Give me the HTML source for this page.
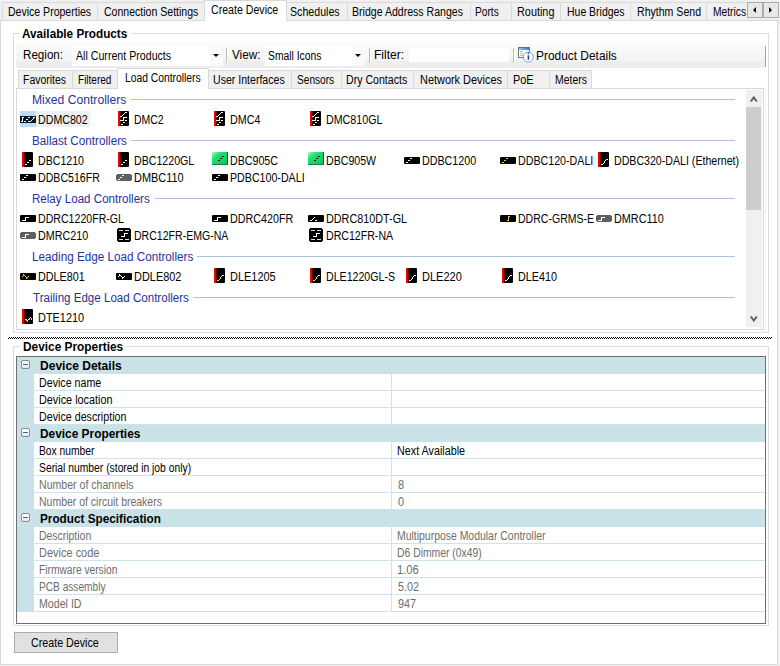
<!DOCTYPE html><html><head><meta charset='utf-8'><style>html,body{margin:0;padding:0;}body{width:780px;height:666px;overflow:hidden;background:#f0f0f0;position:relative;font-family:'Liberation Sans',sans-serif;}.a{position:absolute;box-sizing:border-box;}.t{position:absolute;white-space:pre;line-height:normal;transform-origin:0 0;}svg.a{display:block}</style></head><body><div class='a' style='left:0px;top:20px;width:778px;height:645px;background:#fff;border:1px solid #d9d9d9;'></div><div class='a' style='left:2px;top:2px;width:96px;height:19px;background:#f0f0f0;border:1px solid #d9d9d9;'></div><span class='t' style='left:7.62px;top:5px;font-size:12px;color:#000;transform:scaleX(0.8777);'>Device Properties</span><div class='a' style='left:97px;top:2px;width:108px;height:19px;background:#f0f0f0;border:1px solid #d9d9d9;'></div><span class='t' style='left:104.00px;top:5px;font-size:12px;color:#000;transform:scaleX(0.8785);'>Connection Settings</span><div class='a' style='left:286px;top:2px;width:62px;height:19px;background:#f0f0f0;border:1px solid #d9d9d9;'></div><span class='t' style='left:290.41px;top:5px;font-size:12px;color:#000;transform:scaleX(0.8855);'>Schedules</span><div class='a' style='left:347px;top:2px;width:124px;height:19px;background:#f0f0f0;border:1px solid #d9d9d9;'></div><span class='t' style='left:352.12px;top:5px;font-size:12px;color:#000;transform:scaleX(0.8800);'>Bridge Address Ranges</span><div class='a' style='left:470px;top:2px;width:42px;height:19px;background:#f0f0f0;border:1px solid #d9d9d9;'></div><span class='t' style='left:475.45px;top:5px;font-size:12px;color:#000;transform:scaleX(0.8481);'>Ports</span><div class='a' style='left:511px;top:2px;width:50px;height:19px;background:#f0f0f0;border:1px solid #d9d9d9;'></div><span class='t' style='left:517.10px;top:5px;font-size:12px;color:#000;transform:scaleX(0.9050);'>Routing</span><div class='a' style='left:560px;top:2px;width:71px;height:19px;background:#f0f0f0;border:1px solid #d9d9d9;'></div><span class='t' style='left:566.63px;top:5px;font-size:12px;color:#000;transform:scaleX(0.8723);'>Hue Bridges</span><div class='a' style='left:630px;top:2px;width:77px;height:19px;background:#f0f0f0;border:1px solid #d9d9d9;'></div><span class='t' style='left:636.62px;top:5px;font-size:12px;color:#000;transform:scaleX(0.8803);'>Rhythm Send</span><div class='a' style='left:706px;top:2px;width:95px;height:19px;background:#f0f0f0;border:1px solid #d9d9d9;'></div><span class='t' style='left:712.94px;top:5px;font-size:12px;color:#000;transform:scaleX(0.8553);'>Metrics</span><div class='a' style='left:204px;top:0;width:83px;height:21px;background:#fff;border:1px solid #d9d9d9;border-bottom:none'></div><span class='t' style='left:210.80px;top:3px;font-size:12px;color:#000;transform:scaleX(0.8842);'>Create Device</span><div class='a' style='left:747px;top:2px;width:16px;height:16px;background:#e8e8e8;border:1px solid #acacac'></div><div class='a' style='left:763px;top:2px;width:16px;height:16px;background:#e8e8e8;border:1px solid #acacac'></div><div class='a' style='left:753px;top:7px;width:0;height:0;border-top:3px solid transparent;border-bottom:3px solid transparent;border-right:3px solid #000'></div><div class='a' style='left:769px;top:7px;width:0;height:0;border-top:3px solid transparent;border-bottom:3px solid transparent;border-left:3px solid #000'></div><div class='a' style='left:779px;top:0;width:1px;height:666px;background:#f0f0f0'></div><div class='a' style='left:13px;top:33px;width:756px;height:300px;border:1px solid #dcdcdc;'></div><div class='a' style='left:20px;top:30px;width:112px;height:7px;background:#fff;'></div><span class='t' style='left:22.00px;top:27px;font-size:12px;font-weight:700;color:#000;transform:scaleX(0.9787);'>Available Products</span><div class='a' style='left:16px;top:43px;width:750px;height:25px;border-radius:3px;background:linear-gradient(#fbfbfb,#f3f3f3 72%,#eeeeee 74%,#ededed)'></div><div class='a' style='left:765px;top:46px;width:1px;height:21px;background:#a0a0a0;'></div><span class='t' style='left:22.63px;top:48px;font-size:12px;color:#000;transform:scaleX(0.9675);'>Region:</span><div class='a' style='left:72px;top:45px;width:151px;height:21px;background:#fff;'></div><div class='a' style='left:210px;top:45px;width:13px;height:21px;background:#fafafa;'></div><div class='a' style='left:213px;top:54px;width:0;height:0;border-left:3px solid transparent;border-right:3px solid transparent;border-top:3px solid #000'></div><span class='t' style='left:76.00px;top:49px;font-size:12px;color:#000;transform:scaleX(0.8860);'>All Current Products</span><div class='a' style='left:226px;top:48px;width:1px;height:15px;background:#bcbcbc;'></div><div class='a' style='left:227px;top:48px;width:1px;height:15px;background:#fff;'></div><span class='t' style='left:232.00px;top:48px;font-size:12px;color:#000;transform:scaleX(0.9750);'>View:</span><div class='a' style='left:265px;top:45px;width:100px;height:21px;background:#fff;'></div><div class='a' style='left:352px;top:45px;width:13px;height:21px;background:#fafafa;'></div><div class='a' style='left:355px;top:54px;width:0;height:0;border-left:3px solid transparent;border-right:3px solid transparent;border-top:3px solid #000'></div><span class='t' style='left:267.64px;top:49px;font-size:12px;color:#000;transform:scaleX(0.8607);'>Small Icons</span><div class='a' style='left:369px;top:48px;width:1px;height:15px;background:#bcbcbc;'></div><div class='a' style='left:370px;top:48px;width:1px;height:15px;background:#fff;'></div><span class='t' style='left:374.40px;top:48px;font-size:12px;color:#000;transform:scaleX(1.0036);'>Filter:</span><div class='a' style='left:409px;top:48px;width:100px;height:14px;background:#fff;'></div><div class='a' style='left:513px;top:48px;width:1px;height:15px;background:#bcbcbc;'></div><div class='a' style='left:514px;top:48px;width:1px;height:15px;background:#fff;'></div><svg class='a' style='left:517px;top:46px' width='17' height='17' viewBox='0 0 17 17'><defs><linearGradient id='pdg' x1='0' x2='1'><stop offset='0' stop-color='#9cc3f0'/><stop offset='1' stop-color='#3d7bd6'/></linearGradient></defs><rect x='1.5' y='1.5' width='11' height='10' fill='#fff' stroke='#707070'/><rect x='2' y='2' width='10' height='2' fill='url(#pdg)'/><rect x='3' y='5' width='3' height='1' fill='#a9c6ec'/><rect x='3' y='7' width='3' height='1' fill='#a9c6ec'/><rect x='3' y='9' width='3' height='1' fill='#a9c6ec'/><circle cx='11.3' cy='11' r='5' fill='#fff' stroke='#7fa3d6' stroke-width='1'/><rect x='10.6' y='9.3' width='1.6' height='4.5' fill='#1a47b0'/><rect x='10.6' y='6.6' width='1.6' height='1.4' fill='#1a47b0'/></svg><span class='t' style='left:536.31px;top:49px;font-size:12px;color:#000;transform:scaleX(0.9925);'>Product Details</span><div class='a' style='left:16px;top:88px;width:748px;height:242px;background:#fff;border:1px solid #d9d9d9;'></div><div class='a' style='left:765px;top:89px;width:1px;height:242px;background:#f3f3f3;'></div><div class='a' style='left:17px;top:330px;width:749px;height:1px;background:#f7f7f7;'></div><div class='a' style='left:18px;top:70px;width:55px;height:19px;background:#f0f0f0;border:1px solid #d9d9d9;'></div><span class='t' style='left:23.33px;top:73px;font-size:12px;color:#000;transform:scaleX(0.8708);'>Favorites</span><div class='a' style='left:72px;top:70px;width:46px;height:19px;background:#f0f0f0;border:1px solid #d9d9d9;'></div><span class='t' style='left:78.36px;top:73px;font-size:12px;color:#000;transform:scaleX(0.8359);'>Filtered</span><div class='a' style='left:208px;top:70px;width:84px;height:19px;background:#f0f0f0;border:1px solid #d9d9d9;'></div><span class='t' style='left:213.12px;top:73px;font-size:12px;color:#000;transform:scaleX(0.8812);'>User Interfaces</span><div class='a' style='left:291px;top:70px;width:51px;height:19px;background:#f0f0f0;border:1px solid #d9d9d9;'></div><span class='t' style='left:296.86px;top:73px;font-size:12px;color:#000;transform:scaleX(0.8442);'>Sensors</span><div class='a' style='left:341px;top:70px;width:73px;height:19px;background:#f0f0f0;border:1px solid #d9d9d9;'></div><span class='t' style='left:346.42px;top:73px;font-size:12px;color:#000;transform:scaleX(0.8824);'>Dry Contacts</span><div class='a' style='left:413px;top:70px;width:95px;height:19px;background:#f0f0f0;border:1px solid #d9d9d9;'></div><span class='t' style='left:419.79px;top:73px;font-size:12px;color:#000;transform:scaleX(0.9101);'>Network Devices</span><div class='a' style='left:507px;top:70px;width:43px;height:19px;background:#f0f0f0;border:1px solid #d9d9d9;'></div><span class='t' style='left:513.09px;top:73px;font-size:12px;color:#000;transform:scaleX(0.9091);'>PoE</span><div class='a' style='left:549px;top:70px;width:43px;height:19px;background:#f0f0f0;border:1px solid #d9d9d9;'></div><span class='t' style='left:555.13px;top:73px;font-size:12px;color:#000;transform:scaleX(0.8694);'>Meters</span><div class='a' style='left:117px;top:68px;width:92px;height:21px;background:#fff;border:1px solid #d9d9d9;border-bottom:none'></div><span class='t' style='left:124.54px;top:71px;font-size:12px;color:#000;transform:scaleX(0.8598);'>Load Controllers</span><span class='t' style='left:31.79px;top:93px;font-size:12px;color:#1e32a0;transform:scaleX(1.0109);'>Mixed Controllers</span><div class='a' style='left:130px;top:99px;width:605px;height:1px;background:#b1c3e0;'></div><span class='t' style='left:31.82px;top:134px;font-size:12px;color:#1e32a0;transform:scaleX(0.9750);'>Ballast Controllers</span><div class='a' style='left:131px;top:140px;width:604px;height:1px;background:#b1c3e0;'></div><span class='t' style='left:31.84px;top:192px;font-size:12px;color:#1e32a0;transform:scaleX(0.9645);'>Relay Load Controllers</span><div class='a' style='left:155px;top:198px;width:580px;height:1px;background:#b1c3e0;'></div><span class='t' style='left:31.82px;top:250px;font-size:12px;color:#1e32a0;transform:scaleX(0.9750);'>Leading Edge Load Controllers</span><div class='a' style='left:197px;top:256px;width:538px;height:1px;background:#b1c3e0;'></div><span class='t' style='left:32.80px;top:291px;font-size:12px;color:#1e32a0;transform:scaleX(0.9642);'>Trailing Edge Load Controllers</span><div class='a' style='left:193px;top:297px;width:542px;height:1px;background:#b1c3e0;'></div><div class='a' style='left:36px;top:111px;width:54px;height:16px;background:#efefef;'></div><svg class='a' style='left:20px;top:111px' width='16' height='16' viewBox='0 0 16 16' shape-rendering='crispEdges'><rect x='0' y='0' width='16' height='16' fill='#bcdcf4'/><rect x='0' y='5' width='16' height='7' fill='#061528'/><rect x='2' y='6' width='1' height='5' fill='#fff'/><rect x='3' y='6' width='1' height='1' fill='#fff'/><rect x='1' y='10' width='1' height='1' fill='#fff'/><rect x='4' y='10' width='2' height='1' fill='#fff'/><rect x='6' y='8' width='2' height='1' fill='#fff'/><rect x='8' y='6' width='2' height='1' fill='#fff'/><rect x='8' y='10' width='2' height='1' fill='#fff'/><rect x='10' y='10' width='1' height='1' fill='#fff'/><rect x='11' y='9' width='1' height='1' fill='#fff'/><rect x='12' y='8' width='1' height='1' fill='#fff'/><rect x='13' y='7' width='1' height='1' fill='#fff'/><rect x='13' y='6' width='2' height='1' fill='#fff'/></svg><span class='t' style='left:37.61px;top:113px;font-size:12px;color:#000;transform:scaleX(0.8873);'>DDMC802</span><svg class='a' style='left:118px;top:111px' width='11' height='15' viewBox='0 0 11 15' shape-rendering='crispEdges'><defs><linearGradient id='rg' x1='0' x2='1'><stop offset='0' stop-color='#ff0000'/><stop offset='0.55' stop-color='#e00000'/><stop offset='1' stop-color='#000'/></linearGradient></defs><rect x='0' y='0' width='11' height='15' fill='#000'/><rect x='0' y='0' width='3' height='15' fill='url(#rg)'/><rect x='10' y='0' width='1' height='1' fill='#444'/><rect x='10' y='14' width='1' height='1' fill='#444'/><rect x='7' y='1' width='2' height='1' fill='#fff'/><rect x='6' y='2' width='1' height='1' fill='#fff'/><rect x='5' y='3' width='1' height='1' fill='#fff'/><rect x='4' y='4' width='1' height='1' fill='#fff'/><rect x='2' y='5' width='2' height='1' fill='#fff'/><rect x='5' y='6' width='4' height='1' fill='#fff'/><rect x='5' y='6' width='1' height='4' fill='#fff'/><rect x='2' y='9' width='4' height='1' fill='#fff'/><rect x='7' y='9' width='2' height='1' fill='#fff'/><rect x='5' y='11' width='2' height='1' fill='#fff'/><rect x='3' y='13' width='2' height='1' fill='#fff'/></svg><span class='t' style='left:133.63px;top:113px;font-size:12px;color:#000;transform:scaleX(0.8727);'>DMC2</span><svg class='a' style='left:214px;top:111px' width='11' height='15' viewBox='0 0 11 15' shape-rendering='crispEdges'><defs><linearGradient id='rg' x1='0' x2='1'><stop offset='0' stop-color='#ff0000'/><stop offset='0.55' stop-color='#e00000'/><stop offset='1' stop-color='#000'/></linearGradient></defs><rect x='0' y='0' width='11' height='15' fill='#000'/><rect x='0' y='0' width='3' height='15' fill='url(#rg)'/><rect x='10' y='0' width='1' height='1' fill='#444'/><rect x='10' y='14' width='1' height='1' fill='#444'/><rect x='7' y='1' width='2' height='1' fill='#fff'/><rect x='6' y='2' width='1' height='1' fill='#fff'/><rect x='5' y='3' width='1' height='1' fill='#fff'/><rect x='4' y='4' width='1' height='1' fill='#fff'/><rect x='2' y='5' width='2' height='1' fill='#fff'/><rect x='5' y='6' width='4' height='1' fill='#fff'/><rect x='5' y='6' width='1' height='4' fill='#fff'/><rect x='2' y='9' width='4' height='1' fill='#fff'/><rect x='7' y='9' width='2' height='1' fill='#fff'/><rect x='5' y='11' width='2' height='1' fill='#fff'/><rect x='3' y='13' width='2' height='1' fill='#fff'/></svg><span class='t' style='left:229.61px;top:113px;font-size:12px;color:#000;transform:scaleX(0.8939);'>DMC4</span><svg class='a' style='left:310px;top:111px' width='11' height='15' viewBox='0 0 11 15' shape-rendering='crispEdges'><defs><linearGradient id='rg' x1='0' x2='1'><stop offset='0' stop-color='#ff0000'/><stop offset='0.55' stop-color='#e00000'/><stop offset='1' stop-color='#000'/></linearGradient></defs><rect x='0' y='0' width='11' height='15' fill='#000'/><rect x='0' y='0' width='3' height='15' fill='url(#rg)'/><rect x='10' y='0' width='1' height='1' fill='#444'/><rect x='10' y='14' width='1' height='1' fill='#444'/><rect x='7' y='1' width='2' height='1' fill='#fff'/><rect x='6' y='2' width='1' height='1' fill='#fff'/><rect x='5' y='3' width='1' height='1' fill='#fff'/><rect x='4' y='4' width='1' height='1' fill='#fff'/><rect x='2' y='5' width='2' height='1' fill='#fff'/><rect x='5' y='6' width='4' height='1' fill='#fff'/><rect x='5' y='6' width='1' height='4' fill='#fff'/><rect x='2' y='9' width='4' height='1' fill='#fff'/><rect x='7' y='9' width='2' height='1' fill='#fff'/><rect x='5' y='11' width='2' height='1' fill='#fff'/><rect x='3' y='13' width='2' height='1' fill='#fff'/></svg><span class='t' style='left:325.61px;top:113px;font-size:12px;color:#000;transform:scaleX(0.8903);'>DMC810GL</span><svg class='a' style='left:22px;top:152px' width='11' height='15' viewBox='0 0 11 15' shape-rendering='crispEdges'><defs><linearGradient id='rg' x1='0' x2='1'><stop offset='0' stop-color='#ff0000'/><stop offset='0.55' stop-color='#e00000'/><stop offset='1' stop-color='#000'/></linearGradient></defs><rect x='0' y='0' width='11' height='15' fill='#000'/><rect x='0' y='0' width='3' height='15' fill='url(#rg)'/><rect x='10' y='0' width='1' height='1' fill='#444'/><rect x='10' y='14' width='1' height='1' fill='#444'/><rect x='7' y='8' width='2' height='1' fill='#fff'/><rect x='5' y='10' width='2' height='1' fill='#fff'/><rect x='3' y='12' width='2' height='1' fill='#fff'/></svg><span class='t' style='left:37.62px;top:154px;font-size:12px;color:#000;transform:scaleX(0.8843);'>DBC1210</span><svg class='a' style='left:118px;top:152px' width='11' height='15' viewBox='0 0 11 15' shape-rendering='crispEdges'><defs><linearGradient id='rg' x1='0' x2='1'><stop offset='0' stop-color='#ff0000'/><stop offset='0.55' stop-color='#e00000'/><stop offset='1' stop-color='#000'/></linearGradient></defs><rect x='0' y='0' width='11' height='15' fill='#000'/><rect x='0' y='0' width='3' height='15' fill='url(#rg)'/><rect x='10' y='0' width='1' height='1' fill='#444'/><rect x='10' y='14' width='1' height='1' fill='#444'/><rect x='7' y='8' width='2' height='1' fill='#fff'/><rect x='5' y='10' width='2' height='1' fill='#fff'/><rect x='3' y='12' width='2' height='1' fill='#fff'/></svg><span class='t' style='left:133.61px;top:154px;font-size:12px;color:#000;transform:scaleX(0.8851);'>DBC1220GL</span><svg class='a' style='left:212px;top:152px' width='16' height='13' viewBox='0 0 16 13' shape-rendering='crispEdges'><defs><linearGradient id='gg' x1='0' y1='0' x2='1' y2='1'><stop offset='0' stop-color='#9dffc8'/><stop offset='0.3' stop-color='#1ee070'/><stop offset='1' stop-color='#10c060'/></linearGradient></defs><rect x='0' y='0' width='16' height='13' fill='url(#gg)'/><rect x='15' y='0' width='1' height='13' fill='#0a5a30'/><rect x='0' y='12' width='16' height='1' fill='#058a40'/><rect x='10' y='4' width='2' height='1' fill='#000'/><rect x='8' y='6' width='2' height='1' fill='#000'/><rect x='6' y='8' width='2' height='1' fill='#000'/></svg><span class='t' style='left:229.61px;top:154px;font-size:12px;color:#000;transform:scaleX(0.8885);'>DBC905C</span><svg class='a' style='left:308px;top:152px' width='16' height='13' viewBox='0 0 16 13' shape-rendering='crispEdges'><defs><linearGradient id='gg' x1='0' y1='0' x2='1' y2='1'><stop offset='0' stop-color='#9dffc8'/><stop offset='0.3' stop-color='#1ee070'/><stop offset='1' stop-color='#10c060'/></linearGradient></defs><rect x='0' y='0' width='16' height='13' fill='url(#gg)'/><rect x='15' y='0' width='1' height='13' fill='#0a5a30'/><rect x='0' y='12' width='16' height='1' fill='#058a40'/><rect x='10' y='4' width='2' height='1' fill='#000'/><rect x='8' y='6' width='2' height='1' fill='#000'/><rect x='6' y='8' width='2' height='1' fill='#000'/></svg><span class='t' style='left:325.62px;top:154px;font-size:12px;color:#000;transform:scaleX(0.8839);'>DBC905W</span><svg class='a' style='left:404px;top:157px' width='16' height='7' viewBox='0 0 16 7' shape-rendering='crispEdges'><rect x='0' y='0' width='16' height='7' fill='#000'/><rect x='0' y='0' width='1' height='1' fill='#444'/><rect x='15' y='0' width='1' height='1' fill='#444'/><rect x='0' y='6' width='1' height='1' fill='#444'/><rect x='15' y='6' width='1' height='1' fill='#444'/><rect x='6' y='1' width='2' height='1' fill='#fff'/><rect x='4' y='3' width='2' height='1' fill='#fff'/><rect x='2' y='5' width='2' height='1' fill='#fff'/></svg><span class='t' style='left:421.61px;top:154px;font-size:12px;color:#000;transform:scaleX(0.8917);'>DDBC1200</span><svg class='a' style='left:500px;top:157px' width='16' height='7' viewBox='0 0 16 7' shape-rendering='crispEdges'><rect x='0' y='0' width='16' height='7' fill='#000'/><rect x='0' y='0' width='1' height='1' fill='#444'/><rect x='15' y='0' width='1' height='1' fill='#444'/><rect x='0' y='6' width='1' height='1' fill='#444'/><rect x='15' y='6' width='1' height='1' fill='#444'/><rect x='6' y='1' width='2' height='1' fill='#f0c030'/><rect x='4' y='3' width='2' height='1' fill='#f0c030'/><rect x='2' y='5' width='2' height='1' fill='#f0c030'/></svg><span class='t' style='left:517.61px;top:154px;font-size:12px;color:#000;transform:scaleX(0.8892);'>DDBC120-DALI</span><svg class='a' style='left:598px;top:152px' width='11' height='15' viewBox='0 0 11 15' shape-rendering='crispEdges'><defs><linearGradient id='rg' x1='0' x2='1'><stop offset='0' stop-color='#ff0000'/><stop offset='0.55' stop-color='#e00000'/><stop offset='1' stop-color='#000'/></linearGradient></defs><rect x='0' y='0' width='11' height='15' fill='#000'/><rect x='0' y='0' width='3' height='15' fill='url(#rg)'/><rect x='10' y='0' width='1' height='1' fill='#444'/><rect x='10' y='14' width='1' height='1' fill='#444'/><rect x='3' y='12' width='2' height='1' fill='#fff'/><rect x='5' y='11' width='1' height='1' fill='#fff'/><rect x='6' y='10' width='1' height='1' fill='#fff'/><rect x='6' y='9' width='1' height='1' fill='#fff'/><rect x='7' y='8' width='1' height='1' fill='#fff'/><rect x='8' y='7' width='2' height='1' fill='#fff'/></svg><span class='t' style='left:613.62px;top:154px;font-size:12px;color:#000;transform:scaleX(0.8843);'>DDBC320-DALI (Ethernet)</span><svg class='a' style='left:20px;top:174px' width='16' height='7' viewBox='0 0 16 7' shape-rendering='crispEdges'><rect x='0' y='0' width='16' height='7' fill='#000'/><rect x='0' y='0' width='1' height='1' fill='#444'/><rect x='15' y='0' width='1' height='1' fill='#444'/><rect x='0' y='6' width='1' height='1' fill='#444'/><rect x='15' y='6' width='1' height='1' fill='#444'/><rect x='6' y='1' width='2' height='1' fill='#fff'/><rect x='4' y='3' width='2' height='1' fill='#fff'/><rect x='2' y='5' width='2' height='1' fill='#fff'/></svg><span class='t' style='left:37.62px;top:171px;font-size:12px;color:#000;transform:scaleX(0.8841);'>DDBC516FR</span><svg class='a' style='left:116px;top:174px' width='16' height='7' viewBox='0 0 16 7' shape-rendering='crispEdges'><rect x='1' y='0' width='14' height='7' fill='#5f5f5f'/><rect x='0' y='1' width='16' height='5' fill='#5f5f5f'/><rect x='6' y='1' width='2' height='1' fill='#fff'/><rect x='4' y='3' width='2' height='1' fill='#fff'/><rect x='2' y='5' width='2' height='1' fill='#fff'/></svg><span class='t' style='left:133.59px;top:171px;font-size:12px;color:#000;transform:scaleX(0.9113);'>DMBC110</span><svg class='a' style='left:212px;top:174px' width='16' height='7' viewBox='0 0 16 7' shape-rendering='crispEdges'><rect x='0' y='0' width='16' height='7' fill='#000'/><rect x='0' y='0' width='1' height='1' fill='#444'/><rect x='15' y='0' width='1' height='1' fill='#444'/><rect x='0' y='6' width='1' height='1' fill='#444'/><rect x='15' y='6' width='1' height='1' fill='#444'/><rect x='6' y='1' width='2' height='1' fill='#fff'/><rect x='4' y='3' width='2' height='1' fill='#fff'/><rect x='2' y='5' width='2' height='1' fill='#fff'/></svg><span class='t' style='left:229.61px;top:171px;font-size:12px;color:#000;transform:scaleX(0.8878);'>PDBC100-DALI</span><svg class='a' style='left:20px;top:215px' width='16' height='7' viewBox='0 0 16 7' shape-rendering='crispEdges'><rect x='0' y='0' width='16' height='7' fill='#000'/><rect x='0' y='0' width='1' height='1' fill='#444'/><rect x='15' y='0' width='1' height='1' fill='#444'/><rect x='0' y='6' width='1' height='1' fill='#444'/><rect x='15' y='6' width='1' height='1' fill='#444'/><rect x='2' y='5' width='4' height='1' fill='#fff'/><rect x='5' y='2' width='1' height='4' fill='#fff'/><rect x='5' y='2' width='4' height='1' fill='#fff'/></svg><span class='t' style='left:37.62px;top:212px;font-size:12px;color:#000;transform:scaleX(0.8833);'>DDRC1220FR-GL</span><svg class='a' style='left:212px;top:215px' width='16' height='7' viewBox='0 0 16 7' shape-rendering='crispEdges'><rect x='0' y='0' width='16' height='7' fill='#000'/><rect x='0' y='0' width='1' height='1' fill='#444'/><rect x='15' y='0' width='1' height='1' fill='#444'/><rect x='0' y='6' width='1' height='1' fill='#444'/><rect x='15' y='6' width='1' height='1' fill='#444'/><rect x='2' y='5' width='4' height='1' fill='#fff'/><rect x='5' y='2' width='1' height='4' fill='#fff'/><rect x='5' y='2' width='4' height='1' fill='#fff'/></svg><span class='t' style='left:229.60px;top:212px;font-size:12px;color:#000;transform:scaleX(0.8957);'>DDRC420FR</span><svg class='a' style='left:308px;top:215px' width='16' height='7' viewBox='0 0 16 7' shape-rendering='crispEdges'><rect x='0' y='0' width='16' height='7' fill='#000'/><rect x='0' y='0' width='1' height='1' fill='#444'/><rect x='15' y='0' width='1' height='1' fill='#444'/><rect x='0' y='6' width='1' height='1' fill='#444'/><rect x='15' y='6' width='1' height='1' fill='#444'/><rect x='2' y='5' width='2' height='1' fill='#fff'/><rect x='4' y='4' width='1' height='1' fill='#fff'/><rect x='5' y='3' width='1' height='1' fill='#fff'/><rect x='6' y='2' width='1' height='1' fill='#fff'/><rect x='7' y='5' width='2' height='1' fill='#fff'/></svg><span class='t' style='left:325.60px;top:212px;font-size:12px;color:#000;transform:scaleX(0.9011);'>DDRC810DT-GL</span><svg class='a' style='left:500px;top:215px' width='16' height='7' viewBox='0 0 16 7' shape-rendering='crispEdges'><rect x='0' y='0' width='16' height='7' fill='#000'/><rect x='0' y='0' width='1' height='1' fill='#444'/><rect x='15' y='0' width='1' height='1' fill='#444'/><rect x='0' y='6' width='1' height='1' fill='#444'/><rect x='15' y='6' width='1' height='1' fill='#444'/><rect x='8' y='1' width='2' height='1' fill='#f0c030'/><rect x='8' y='1' width='1' height='5' fill='#f0c030'/><rect x='7' y='5' width='1' height='1' fill='#f0c030'/></svg><span class='t' style='left:517.62px;top:212px;font-size:12px;color:#000;transform:scaleX(0.8779);'>DDRC-GRMS-E</span><svg class='a' style='left:596px;top:215px' width='16' height='7' viewBox='0 0 16 7' shape-rendering='crispEdges'><rect x='1' y='0' width='14' height='7' fill='#5f5f5f'/><rect x='0' y='1' width='16' height='5' fill='#5f5f5f'/><rect x='2' y='5' width='4' height='1' fill='#fff'/><rect x='5' y='2' width='1' height='4' fill='#fff'/><rect x='5' y='2' width='4' height='1' fill='#fff'/></svg><span class='t' style='left:613.60px;top:212px;font-size:12px;color:#000;transform:scaleX(0.9037);'>DMRC110</span><svg class='a' style='left:20px;top:232px' width='16' height='7' viewBox='0 0 16 7' shape-rendering='crispEdges'><rect x='1' y='0' width='14' height='7' fill='#5f5f5f'/><rect x='0' y='1' width='16' height='5' fill='#5f5f5f'/><rect x='2' y='5' width='4' height='1' fill='#fff'/><rect x='5' y='2' width='1' height='4' fill='#fff'/><rect x='5' y='2' width='4' height='1' fill='#fff'/></svg><span class='t' style='left:37.61px;top:229px;font-size:12px;color:#000;transform:scaleX(0.8945);'>DMRC210</span><svg class='a' style='left:117px;top:228px' width='14' height='14' viewBox='0 0 14 14' shape-rendering='crispEdges'><rect x='1' y='0' width='12' height='14' fill='#000'/><rect x='0' y='1' width='14' height='12' fill='#000'/><rect x='2' y='2' width='4' height='1' fill='#ddd'/><rect x='8' y='2' width='4' height='1' fill='#ddd'/><rect x='2' y='11' width='4' height='1' fill='#ddd'/><rect x='8' y='11' width='4' height='1' fill='#ddd'/><rect x='7' y='5' width='4' height='1' fill='#fff'/><rect x='7' y='5' width='1' height='4' fill='#fff'/><rect x='4' y='8' width='4' height='1' fill='#fff'/></svg><span class='t' style='left:133.62px;top:229px;font-size:12px;color:#000;transform:scaleX(0.8792);'>DRC12FR-EMG-NA</span><svg class='a' style='left:309px;top:228px' width='14' height='14' viewBox='0 0 14 14' shape-rendering='crispEdges'><rect x='1' y='0' width='12' height='14' fill='#000'/><rect x='0' y='1' width='14' height='12' fill='#000'/><rect x='2' y='2' width='4' height='1' fill='#ddd'/><rect x='8' y='2' width='4' height='1' fill='#ddd'/><rect x='2' y='11' width='4' height='1' fill='#ddd'/><rect x='8' y='11' width='4' height='1' fill='#ddd'/><rect x='7' y='5' width='4' height='1' fill='#fff'/><rect x='7' y='5' width='1' height='4' fill='#fff'/><rect x='4' y='8' width='4' height='1' fill='#fff'/></svg><span class='t' style='left:325.62px;top:229px;font-size:12px;color:#000;transform:scaleX(0.8827);'>DRC12FR-NA</span><svg class='a' style='left:20px;top:273px' width='16' height='7' viewBox='0 0 16 7' shape-rendering='crispEdges'><rect x='0' y='0' width='16' height='7' fill='#000'/><rect x='0' y='0' width='1' height='1' fill='#444'/><rect x='15' y='0' width='1' height='1' fill='#444'/><rect x='0' y='6' width='1' height='1' fill='#444'/><rect x='15' y='6' width='1' height='1' fill='#444'/><rect x='2' y='3' width='1' height='1' fill='#f0c030'/><rect x='3' y='1' width='1' height='1' fill='#f0c030'/><rect x='3' y='2' width='1' height='1' fill='#f0c030'/><rect x='4' y='2' width='1' height='1' fill='#f0c030'/><rect x='5' y='3' width='1' height='1' fill='#f0c030'/><rect x='6' y='4' width='1' height='1' fill='#f0c030'/><rect x='6' y='5' width='1' height='1' fill='#f0c030'/><rect x='7' y='4' width='1' height='1' fill='#f0c030'/><rect x='8' y='3' width='1' height='1' fill='#f0c030'/></svg><span class='t' style='left:37.60px;top:270px;font-size:12px;color:#000;transform:scaleX(0.8980);'>DDLE801</span><svg class='a' style='left:116px;top:273px' width='16' height='7' viewBox='0 0 16 7' shape-rendering='crispEdges'><rect x='0' y='0' width='16' height='7' fill='#000'/><rect x='0' y='0' width='1' height='1' fill='#444'/><rect x='15' y='0' width='1' height='1' fill='#444'/><rect x='0' y='6' width='1' height='1' fill='#444'/><rect x='15' y='6' width='1' height='1' fill='#444'/><rect x='2' y='3' width='1' height='1' fill='#fff'/><rect x='3' y='1' width='1' height='1' fill='#fff'/><rect x='3' y='2' width='1' height='1' fill='#fff'/><rect x='4' y='2' width='1' height='1' fill='#fff'/><rect x='5' y='3' width='1' height='1' fill='#fff'/><rect x='6' y='4' width='1' height='1' fill='#fff'/><rect x='6' y='5' width='1' height='1' fill='#fff'/><rect x='7' y='4' width='1' height='1' fill='#fff'/><rect x='8' y='3' width='1' height='1' fill='#fff'/></svg><span class='t' style='left:133.59px;top:270px;font-size:12px;color:#000;transform:scaleX(0.9118);'>DDLE802</span><svg class='a' style='left:214px;top:268px' width='11' height='15' viewBox='0 0 11 15' shape-rendering='crispEdges'><defs><linearGradient id='rg' x1='0' x2='1'><stop offset='0' stop-color='#ff0000'/><stop offset='0.55' stop-color='#e00000'/><stop offset='1' stop-color='#000'/></linearGradient></defs><rect x='0' y='0' width='11' height='15' fill='#000'/><rect x='0' y='0' width='3' height='15' fill='url(#rg)'/><rect x='10' y='0' width='1' height='1' fill='#444'/><rect x='10' y='14' width='1' height='1' fill='#444'/><rect x='3' y='12' width='2' height='1' fill='#ffd633'/><rect x='5' y='11' width='1' height='1' fill='#ffd633'/><rect x='6' y='10' width='1' height='1' fill='#ffd633'/><rect x='6' y='9' width='1' height='1' fill='#ffd633'/><rect x='7' y='8' width='1' height='1' fill='#ffd633'/><rect x='8' y='7' width='2' height='1' fill='#ffd633'/></svg><span class='t' style='left:229.59px;top:270px;font-size:12px;color:#000;transform:scaleX(0.9122);'>DLE1205</span><svg class='a' style='left:310px;top:268px' width='11' height='15' viewBox='0 0 11 15' shape-rendering='crispEdges'><defs><linearGradient id='rg' x1='0' x2='1'><stop offset='0' stop-color='#ff0000'/><stop offset='0.55' stop-color='#e00000'/><stop offset='1' stop-color='#000'/></linearGradient></defs><rect x='0' y='0' width='11' height='15' fill='#000'/><rect x='0' y='0' width='3' height='15' fill='url(#rg)'/><rect x='10' y='0' width='1' height='1' fill='#444'/><rect x='10' y='14' width='1' height='1' fill='#444'/><rect x='3' y='12' width='2' height='1' fill='#ffd633'/><rect x='5' y='11' width='1' height='1' fill='#ffd633'/><rect x='6' y='10' width='1' height='1' fill='#ffd633'/><rect x='6' y='9' width='1' height='1' fill='#ffd633'/><rect x='7' y='8' width='1' height='1' fill='#ffd633'/><rect x='8' y='7' width='2' height='1' fill='#ffd633'/></svg><span class='t' style='left:325.62px;top:270px;font-size:12px;color:#000;transform:scaleX(0.8844);'>DLE1220GL-S</span><svg class='a' style='left:406px;top:268px' width='11' height='15' viewBox='0 0 11 15' shape-rendering='crispEdges'><defs><linearGradient id='rg' x1='0' x2='1'><stop offset='0' stop-color='#ff0000'/><stop offset='0.55' stop-color='#e00000'/><stop offset='1' stop-color='#000'/></linearGradient></defs><rect x='0' y='0' width='11' height='15' fill='#000'/><rect x='0' y='0' width='3' height='15' fill='url(#rg)'/><rect x='10' y='0' width='1' height='1' fill='#444'/><rect x='10' y='14' width='1' height='1' fill='#444'/><rect x='3' y='12' width='2' height='1' fill='#fff'/><rect x='5' y='11' width='1' height='1' fill='#fff'/><rect x='6' y='10' width='1' height='1' fill='#fff'/><rect x='6' y='9' width='1' height='1' fill='#fff'/><rect x='7' y='8' width='1' height='1' fill='#fff'/><rect x='8' y='7' width='2' height='1' fill='#fff'/></svg><span class='t' style='left:421.58px;top:270px;font-size:12px;color:#000;transform:scaleX(0.9167);'>DLE220</span><svg class='a' style='left:502px;top:268px' width='11' height='15' viewBox='0 0 11 15' shape-rendering='crispEdges'><defs><linearGradient id='rg' x1='0' x2='1'><stop offset='0' stop-color='#ff0000'/><stop offset='0.55' stop-color='#e00000'/><stop offset='1' stop-color='#000'/></linearGradient></defs><rect x='0' y='0' width='11' height='15' fill='#000'/><rect x='0' y='0' width='3' height='15' fill='url(#rg)'/><rect x='10' y='0' width='1' height='1' fill='#444'/><rect x='10' y='14' width='1' height='1' fill='#444'/><rect x='3' y='12' width='2' height='1' fill='#fff'/><rect x='5' y='11' width='1' height='1' fill='#fff'/><rect x='6' y='10' width='1' height='1' fill='#fff'/><rect x='6' y='9' width='1' height='1' fill='#fff'/><rect x='7' y='8' width='1' height='1' fill='#fff'/><rect x='8' y='7' width='2' height='1' fill='#fff'/></svg><span class='t' style='left:517.60px;top:270px;font-size:12px;color:#000;transform:scaleX(0.8976);'>DLE410</span><svg class='a' style='left:22px;top:309px' width='11' height='15' viewBox='0 0 11 15' shape-rendering='crispEdges'><defs><linearGradient id='rg' x1='0' x2='1'><stop offset='0' stop-color='#ff0000'/><stop offset='0.55' stop-color='#e00000'/><stop offset='1' stop-color='#000'/></linearGradient></defs><rect x='0' y='0' width='11' height='15' fill='#000'/><rect x='0' y='0' width='3' height='15' fill='url(#rg)'/><rect x='10' y='0' width='1' height='1' fill='#444'/><rect x='10' y='14' width='1' height='1' fill='#444'/><rect x='3' y='10' width='1' height='1' fill='#ffd633'/><rect x='4' y='10' width='1' height='1' fill='#ffd633'/><rect x='4' y='11' width='1' height='1' fill='#ffd633'/><rect x='5' y='12' width='1' height='1' fill='#ffd633'/><rect x='5' y='11' width='1' height='1' fill='#ffd633'/><rect x='6' y='10' width='1' height='1' fill='#ffd633'/><rect x='7' y='9' width='1' height='1' fill='#ffd633'/><rect x='7' y='10' width='1' height='1' fill='#ffd633'/><rect x='8' y='8' width='1' height='1' fill='#ffd633'/><rect x='9' y='9' width='1' height='1' fill='#ffd633'/><rect x='9' y='10' width='1' height='1' fill='#ffd633'/></svg><span class='t' style='left:37.59px;top:311px;font-size:12px;color:#000;transform:scaleX(0.9100);'>DTE1210</span><div class='a' style='left:746px;top:90px;width:16px;height:237px;background:#f0f0f0;'></div><div class='a' style='left:746px;top:107px;width:15px;height:103px;background:#cdcdcd;'></div><svg class='a' style='left:749px;top:95px' width='10' height='8'><path d='M1.8 6.5 L4.8 2.5 L7.8 6.5' stroke='#606060' stroke-width='2' fill='none'/></svg><svg class='a' style='left:749px;top:315px' width='10' height='8'><path d='M1.8 1.5 L4.8 5.5 L7.8 1.5' stroke='#606060' stroke-width='2' fill='none'/></svg><div class='a' style='left:8px;top:337px;width:764px;height:2px;background-image:linear-gradient(45deg,#000 25%,transparent 25%,transparent 75%,#000 75%),linear-gradient(45deg,#000 25%,transparent 25%,transparent 75%,#000 75%);background-size:2px 2px;background-position:0 0,1px 1px'></div><div class='a' style='left:13px;top:346px;width:756px;height:280px;border:1px solid #dcdcdc;'></div><div class='a' style='left:20px;top:340px;width:107px;height:11px;background:#fff;'></div><span class='t' style='left:22.90px;top:340px;font-size:12px;font-weight:700;color:#000;transform:scaleX(0.9881);'>Device Properties</span><div class='a' style='left:16px;top:356px;width:750px;height:268px;background:#fff;border:1px solid #6e6e6e;'></div><div class='a' style='left:17px;top:357px;width:17px;height:255px;background:#c9e2e8;'></div><div class='a' style='left:17px;top:357px;width:748px;height:17px;background:#c9e2e8;'></div><div class='a' style='left:21px;top:360px;width:9px;height:9px;border:1px solid #8c8c8c;border-radius:2px;background:linear-gradient(#fff 40%,#e4e4e4)'></div><div class='a' style='left:23px;top:364px;width:5px;height:1px;background:#3c5aa8;'></div><span class='t' style='left:39.70px;top:359px;font-size:12px;font-weight:700;color:#000;transform:scaleX(1.0037);'>Device Details</span><div class='a' style='left:34px;top:390px;width:731px;height:1px;background:#cfe4ea;'></div><div class='a' style='left:391px;top:374px;width:1px;height:16px;background:#cfe4ea;'></div><span class='t' style='left:38.81px;top:376px;font-size:12px;color:#000;transform:scaleX(0.8884);'>Device name</span><div class='a' style='left:34px;top:407px;width:731px;height:1px;background:#cfe4ea;'></div><div class='a' style='left:391px;top:391px;width:1px;height:16px;background:#cfe4ea;'></div><span class='t' style='left:38.80px;top:393px;font-size:12px;color:#000;transform:scaleX(0.9037);'>Device location</span><div class='a' style='left:34px;top:424px;width:731px;height:1px;background:#cfe4ea;'></div><div class='a' style='left:391px;top:408px;width:1px;height:16px;background:#cfe4ea;'></div><span class='t' style='left:38.81px;top:410px;font-size:12px;color:#000;transform:scaleX(0.8918);'>Device description</span><div class='a' style='left:17px;top:425px;width:748px;height:17px;background:#c9e2e8;'></div><div class='a' style='left:21px;top:428px;width:9px;height:9px;border:1px solid #8c8c8c;border-radius:2px;background:linear-gradient(#fff 40%,#e4e4e4)'></div><div class='a' style='left:23px;top:432px;width:5px;height:1px;background:#3c5aa8;'></div><span class='t' style='left:39.70px;top:427px;font-size:12px;font-weight:700;color:#000;transform:scaleX(0.9901);'>Device Properties</span><div class='a' style='left:34px;top:458px;width:731px;height:1px;background:#cfe4ea;'></div><div class='a' style='left:391px;top:442px;width:1px;height:16px;background:#cfe4ea;'></div><span class='t' style='left:38.84px;top:444px;font-size:12px;color:#000;transform:scaleX(0.8578);'>Box number</span><span class='t' style='left:396.70px;top:444px;font-size:12px;color:#000;transform:scaleX(0.8973);'>Next Available</span><div class='a' style='left:34px;top:475px;width:731px;height:1px;background:#cfe4ea;'></div><div class='a' style='left:391px;top:459px;width:1px;height:16px;background:#cfe4ea;'></div><span class='t' style='left:38.84px;top:461px;font-size:12px;color:#000;transform:scaleX(0.8606);'>Serial number (stored in job only)</span><div class='a' style='left:34px;top:492px;width:731px;height:1px;background:#cfe4ea;'></div><div class='a' style='left:391px;top:476px;width:1px;height:16px;background:#cfe4ea;'></div><span class='t' style='left:38.82px;top:478px;font-size:12px;color:#6d6d6d;transform:scaleX(0.8802);'>Number of channels</span><span class='t' style='left:397.60px;top:478px;font-size:12px;color:#6d6d6d;transform:scaleX(0.9143);'>8</span><div class='a' style='left:34px;top:509px;width:731px;height:1px;background:#cfe4ea;'></div><div class='a' style='left:391px;top:493px;width:1px;height:16px;background:#cfe4ea;'></div><span class='t' style='left:38.83px;top:495px;font-size:12px;color:#6d6d6d;transform:scaleX(0.8736);'>Number of circuit breakers</span><span class='t' style='left:397.60px;top:495px;font-size:12px;color:#6d6d6d;transform:scaleX(0.9143);'>0</span><div class='a' style='left:17px;top:510px;width:748px;height:17px;background:#c9e2e8;'></div><div class='a' style='left:21px;top:513px;width:9px;height:9px;border:1px solid #8c8c8c;border-radius:2px;background:linear-gradient(#fff 40%,#e4e4e4)'></div><div class='a' style='left:23px;top:517px;width:5px;height:1px;background:#3c5aa8;'></div><span class='t' style='left:39.70px;top:512px;font-size:12px;font-weight:700;color:#000;transform:scaleX(0.9805);'>Product Specification</span><div class='a' style='left:34px;top:543px;width:731px;height:1px;background:#cfe4ea;'></div><div class='a' style='left:391px;top:527px;width:1px;height:16px;background:#cfe4ea;'></div><span class='t' style='left:38.83px;top:529px;font-size:12px;color:#6d6d6d;transform:scaleX(0.8695);'>Description</span><span class='t' style='left:396.73px;top:529px;font-size:12px;color:#6d6d6d;transform:scaleX(0.8700);'>Multipurpose Modular Controller</span><div class='a' style='left:34px;top:560px;width:731px;height:1px;background:#cfe4ea;'></div><div class='a' style='left:391px;top:544px;width:1px;height:16px;background:#cfe4ea;'></div><span class='t' style='left:38.78px;top:546px;font-size:12px;color:#6d6d6d;transform:scaleX(0.9154);'>Device code</span><span class='t' style='left:396.74px;top:546px;font-size:12px;color:#6d6d6d;transform:scaleX(0.8649);'>D6 Dimmer (0x49)</span><div class='a' style='left:34px;top:577px;width:731px;height:1px;background:#cfe4ea;'></div><div class='a' style='left:391px;top:561px;width:1px;height:16px;background:#cfe4ea;'></div><span class='t' style='left:38.85px;top:563px;font-size:12px;color:#6d6d6d;transform:scaleX(0.8516);'>Firmware version</span><span class='t' style='left:396.66px;top:563px;font-size:12px;color:#6d6d6d;transform:scaleX(0.9364);'>1.06</span><div class='a' style='left:34px;top:594px;width:731px;height:1px;background:#cfe4ea;'></div><div class='a' style='left:391px;top:578px;width:1px;height:16px;background:#cfe4ea;'></div><span class='t' style='left:38.86px;top:580px;font-size:12px;color:#6d6d6d;transform:scaleX(0.8449);'>PCB assembly</span><span class='t' style='left:397.60px;top:580px;font-size:12px;color:#6d6d6d;transform:scaleX(0.8957);'>5.02</span><div class='a' style='left:34px;top:611px;width:731px;height:1px;background:#cfe4ea;'></div><div class='a' style='left:391px;top:595px;width:1px;height:16px;background:#cfe4ea;'></div><span class='t' style='left:38.81px;top:597px;font-size:12px;color:#6d6d6d;transform:scaleX(0.8851);'>Model ID</span><span class='t' style='left:397.60px;top:597px;font-size:12px;color:#6d6d6d;transform:scaleX(0.8950);'>947</span><div class='a' style='left:14px;top:632px;width:104px;height:21px;background:#e1e1e1;border:1px solid #adadad;'></div><span class='t' style='left:30.80px;top:636px;font-size:12px;color:#000;transform:scaleX(0.8908);'>Create Device</span></body></html>
